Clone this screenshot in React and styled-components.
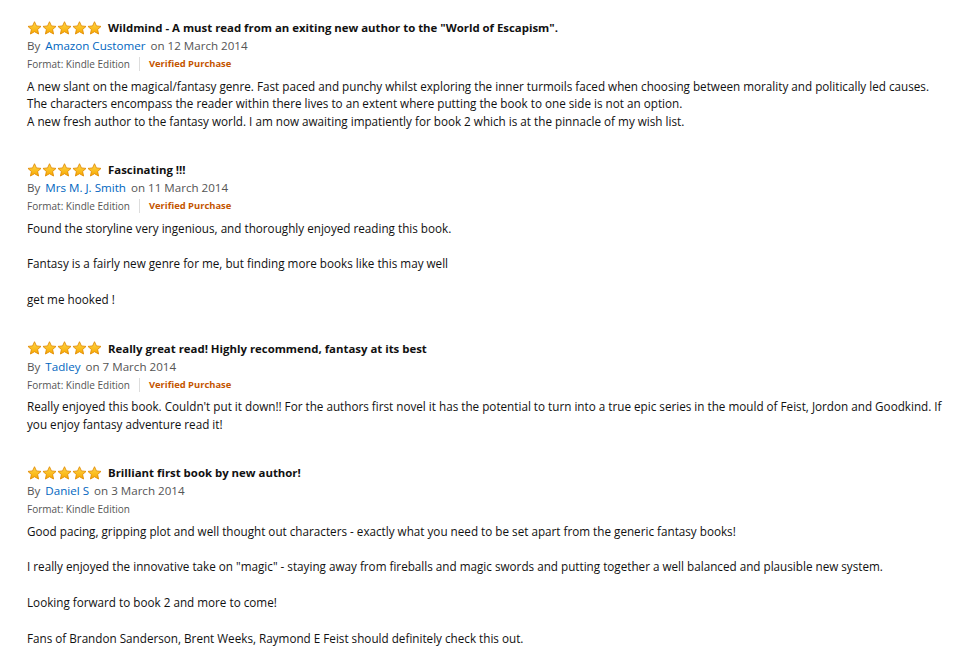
import styled, { createGlobalStyle } from 'styled-components';

const Global = createGlobalStyle`
  html, body { margin: 0; padding: 0; background: #fff; }
  body { font-family: "Open Sans", "Noto Sans", sans-serif; color: #111; }
`;

const reviews = [
  {
    title: 'Wildmind - A must read from an exiting new author to the "World of Escapism".',
    author: 'Amazon Customer',
    date: '12 March 2014',
    verified: true,
    paragraphs: [
      'A new slant on the magical/fantasy genre. Fast paced and punchy whilst exploring the inner turmoils faced when choosing between morality and politically led causes.\nThe characters encompass the reader within there lives to an extent where putting the book to one side is not an option.\nA new fresh author to the fantasy world. I am now awaiting impatiently for book 2 which is at the pinnacle of my wish list.',
    ],
  },
  {
    title: 'Fascinating !!!',
    author: 'Mrs M. J. Smith',
    date: '11 March 2014',
    verified: true,
    paragraphs: [
      'Found the storyline very ingenious, and thoroughly enjoyed reading this book.',
      'Fantasy is a fairly new genre for me, but finding more books like this may well',
      'get me hooked !',
    ],
  },
  {
    title: 'Really great read! Highly recommend, fantasy at its best',
    author: 'Tadley',
    date: '7 March 2014',
    verified: true,
    paragraphs: [
      "Really enjoyed this book. Couldn't put it down!! For the authors first novel it has the potential to turn into a true epic series in the mould of Feist, Jordon and Goodkind. If you enjoy fantasy adventure read it!",
    ],
  },
  {
    title: 'Brilliant first book by new author!',
    author: 'Daniel S',
    date: '3 March 2014',
    verified: false,
    paragraphs: [
      'Good pacing, gripping plot and well thought out characters - exactly what you need to be set apart from the generic fantasy books!',
      'I really enjoyed the innovative take on "magic" - staying away from fireballs and magic swords and putting together a well balanced and plausible new system.',
      'Looking forward to book 2 and more to come!',
      'Fans of Brandon Sanderson, Brent Weeks, Raymond E Feist should definitely check this out.',
    ],
  },
];

const Star = () => (
  <svg width="15" height="14" viewBox="0 0 24 23">
    <defs>
      <linearGradient id="sg" x1="0" y1="0" x2="0" y2="1">
        <stop offset="0" stopColor="#ffd84a" />
        <stop offset="1" stopColor="#f7a800" />
      </linearGradient>
    </defs>
    <path
      d="M12 1.2l3.2 6.9 7.5.8-5.6 5.1 1.6 7.4L12 17.6l-6.7 3.8 1.6-7.4L1.3 8.9l7.5-.8z"
      fill="url(#sg)"
      stroke="#e08a00"
      strokeWidth="1.4"
      strokeLinejoin="round"
    />
  </svg>
);

export default function App() {
  return (
    <>
      <Global />
      <List>
        {reviews.map((r) => (
          <Review key={r.title}>
            <TitleRow>
              <Stars>
                {[0, 1, 2, 3, 4].map((i) => (
                  <Star key={i} />
                ))}
              </Stars>
              <Title>{r.title}</Title>
            </TitleRow>
            <Byline>
              By <Author>{r.author}</Author> on {r.date}
            </Byline>
            <Meta>
              <span>Format: Kindle Edition</span>
              {r.verified && <Verified>Verified Purchase</Verified>}
            </Meta>
            <Body>
              {r.paragraphs.map((p, i) => (
                <Para key={i}>{p}</Para>
              ))}
            </Body>
          </Review>
        ))}
      </List>
    </>
  );
}

const List = styled.div`
  display: flex;
  flex-direction: column;
  gap: 30px;
  padding: 18px 20px 0 27px;
  width: 923px;
`;

const Review = styled.div`
  display: flex;
  flex-direction: column;
`;

const TitleRow = styled.div`
  display: flex;
  align-items: center;
  gap: 6px;
  height: 19px;
`;

const Stars = styled.div`
  display: flex;
  svg { display: block; }
`;

const Title = styled.span`
  font-weight: 700;
  font-size: 11.4px;
  color: #111;
`;

const Byline = styled.div`
  font-size: 11.6px;
  color: #555;
  height: 18px;
  line-height: 18px;
`;

const Author = styled.span`
  color: #0066c0;
  margin: 0 2px;
`;

const Meta = styled.div`
  display: flex;
  align-items: center;
  font-size: 10px;
  color: #555;
  height: 18px;
  margin-bottom: 4.5px;
`;

const Verified = styled.span`
  color: #c45500;
  font-weight: 700;
  font-size: 9.4px;
  margin-left: 9px;
  padding-left: 9px;
  border-left: 1px solid #ddd;
  line-height: 14px;
`;

const Body = styled.div`
  display: flex;
  flex-direction: column;
  gap: 18px;
`;

const Para = styled.p`
  margin: 0;
  font-size: 11.7px;
  line-height: 17.6px;
  color: #111;
  white-space: pre-line;
`;
